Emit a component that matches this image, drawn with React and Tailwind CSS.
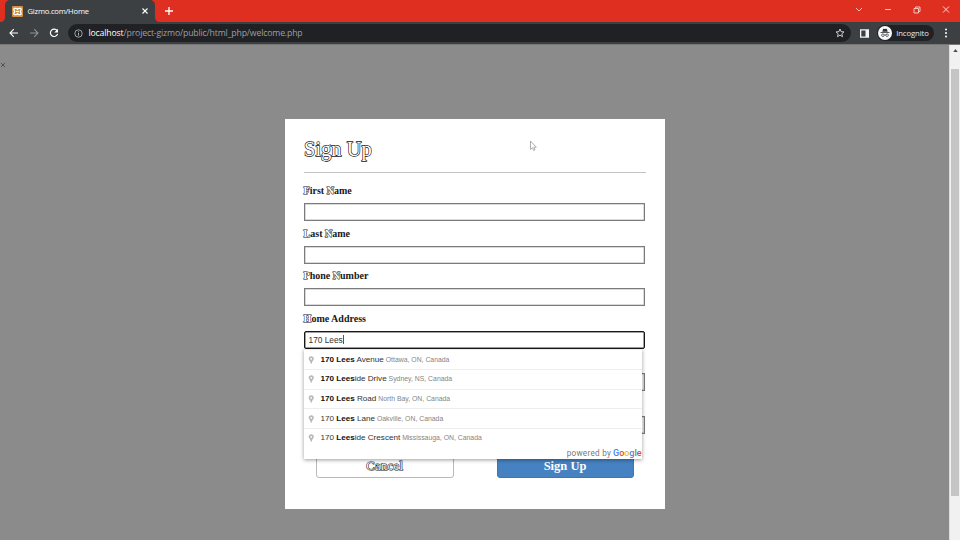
import React from "react";

const SUGGESTIONS = [
  { pre: "", bold: "170 Lees", rest: " Avenue", area: "Ottawa, ON, Canada" },
  { pre: "", bold: "170 Lees", rest: "ide Drive", area: "Sydney, NS, Canada" },
  { pre: "", bold: "170 Lees", rest: " Road", area: "North Bay, ON, Canada" },
  { pre: "170 ", bold: "Lees", rest: " Lane", area: "Oakville, ON, Canada" },
  { pre: "170 ", bold: "Lees", rest: "ide Crescent", area: "Mississauga, ON, Canada" },
];

function Hollow({ children }) {
  return <span className="text-white [-webkit-text-stroke:1px_#111] [paint-order:stroke_fill]">{children}</span>;
}

function Field({ label, children }) {
  return (
    <div className="h-[42.6px]">
      <div className="h-[18px] text-[10px] leading-[12px] font-bold text-[#181818] whitespace-pre">{label}</div>
      {children || <div className="h-[18px] w-[341px] border border-[#7b7b7b] shadow-[inset_0_0_0_0.5px_#b5b5b5]" />}
    </div>
  );
}

function Pin() {
  return (
    <svg viewBox="0 0 8 10" className="mr-[6px] h-[10px] w-[6.5px] shrink-0">
      <path d="M4 .5C2 .5.8 1.9.8 3.6.8 5.6 3 6.3 3.5 9.6h1C5 6.3 7.2 5.6 7.2 3.6 7.2 1.9 6 .5 4 .5Z" fill="#b8b8b8" />
      <circle cx="4" cy="3.6" r="1.2" fill="#fff" />
    </svg>
  );
}

function TabStrip() {
  return (
    <div className="flex h-[22px] bg-[#df2f20]">
      <div className="relative ml-[5px] flex h-[22px] w-[150px] items-center rounded-t-[5px] bg-[#3c4043] pl-[7px] text-white">
        <svg className="absolute bottom-0 -left-[5px] h-[5px] w-[5px]" viewBox="0 0 5 5"><path d="M5 0v5H0q5 0 5-5" fill="#3c4043" /></svg>
        <svg className="absolute -right-[5px] bottom-0 h-[5px] w-[5px]" viewBox="0 0 5 5"><path d="M0 0v5h5Q0 5 0 0" fill="#3c4043" /></svg>
        <svg viewBox="0 0 11 11" className="h-[11px] w-[11px]">
          <rect width="11" height="11" rx="1" fill="#d3913f" />
          <path d="M2.7 2.3h1.4c1 0 1 .8 1.4 1.1.4-.3.4-1.1 1.4-1.1h1.4c.8 0 1 .7.8 1.5L8.3 5.5l.8 1.7c.2.8 0 1.5-.8 1.5H6.9c-1 0-1-.8-1.4-1.1-.4.3-.4 1.1-1.4 1.1H2.7c-.8 0-1-.7-.8-1.5l.8-1.7-.8-1.7c-.2-.8 0-1.5.8-1.5Z" fill="none" stroke="#fff" strokeWidth="1.3" />
          <path d="M4 5.5h3" stroke="#fff" strokeWidth="1.2" />
        </svg>
        <span className="ml-[4.5px] w-[114px] text-[7.6px] leading-[10px] tracking-[-0.2px]">Gizmo.com/Home</span>
        <svg viewBox="0 0 6 6" className="h-[6px] w-[6px] shrink-0"><path d="m.5.5 5 5m0-5-5 5" stroke="#fff" strokeWidth="1.1" /></svg>
      </div>
      <svg viewBox="0 0 8 8" className="mt-[7px] ml-[10px] h-[8px] w-[8px]"><path d="M4 0v8M0 4h8" stroke="#fff" strokeWidth="1.3" /></svg>
      <div className="mt-[5px] ml-auto flex h-[9px] items-center gap-[21px] pr-[10.5px]">
        <svg viewBox="0 0 8 8" className="h-2 w-2" fill="none" stroke="#f8c3bd"><path d="m1 2 3 3 3-3" /></svg>
        <svg viewBox="0 0 8 8" className="h-2 w-2" fill="none" stroke="#f8c3bd"><path d="M1 3.500h6" /></svg>
        <svg viewBox="0 0 8 8" className="h-2 w-2" fill="none" stroke="#f8c3bd"><path d="M1 2.5h4.500V7H1ZM2.500 2.500V1H7v4.500H5.500" /></svg>
        <svg viewBox="0 0 8 8" className="h-2 w-2" fill="none" stroke="#fbd8d4"><path d="m1 .5 6 6m0-6-6 6" /></svg>
      </div>
    </div>
  );
}

function Toolbar() {
  return (
    <div className="flex h-[22px] items-center bg-[#3c4043]">
      <svg viewBox="0 0 10 10" className="ml-[9px] h-[10px] w-[10px]" fill="none" stroke="#fff" strokeWidth="1.1"><path d="M9 5H1.2M4.800 1.200 1 5l3.800 3.800" /></svg>
      <svg viewBox="0 0 10 10" className="ml-[10px] h-[10px] w-[10px]" fill="none" stroke="#8e9194" strokeWidth="1.1"><path d="M1 5h7.800M5.200 1.200 9 5 5.200 8.800" /></svg>
      <svg viewBox="0 0 10 10" className="ml-[10px] h-[10px] w-[10px]">
        <path d="M8.100 2.600A3.700 3.700 0 1 0 8.600 6" fill="none" stroke="#fff" strokeWidth="1.2" />
        <path d="M9 .8v3.700H5.300Z" fill="#fff" />
      </svg>
      <div className="ml-[9px] flex h-[18px] w-[783px] items-center rounded-full bg-[#202124] pr-[6px] pl-[6px]">
        <svg viewBox="0 0 9 9" className="h-[9px] w-[9px]" fill="none" stroke="#aeb1b5"><circle cx="4.5" cy="4.500" r="3.700" strokeWidth=".9" /><path d="M4.500 4v2.600M4.500 2.300v1" /></svg>
        <span className="ml-[5.5px] text-[8.7px] leading-[12px] tracking-[-0.155px] text-[#9aa0a6]"><span className="text-white">localhost</span>/project-gizmo/public/html_php/welcome.php</span>
        <svg viewBox="0 0 10 10" className="ml-auto h-[10px] w-[10px]" fill="none" stroke="#dadce0" strokeWidth=".9"><path d="m5 1 1.100 2.700 2.900.2-2.200 1.900.7 2.900L5 7.100 2.500 8.700l.7-2.900L1 3.900l2.900-.2Z" /></svg>
      </div>
      <svg viewBox="0 0 9 9" className="ml-[9px] h-[9px] w-[9px]"><path d="M0 .3h9v8.400H0ZM1.300 1.600v5.800H5.500V1.600Z" fill="#f1f3f4" fillRule="evenodd" /></svg>
      <div className="ml-[8px] flex h-[16px] w-[57px] items-center rounded-full bg-[#202124] pl-px">
        <svg viewBox="0 0 14 14" className="h-[14px] w-[14px]">
          <circle cx="7" cy="7" r="7" fill="#f8f9fa" />
          <path d="M4.300 5.700 5.100 3q.2-.5.8-.3l1.100.3 1.100-.3q.6-.2.8.3l.8 2.700Z" fill="#303134" />
          <path d="M2.500 6.500h9" stroke="#303134" strokeWidth=".8" />
          <g fill="none" stroke="#404246" strokeWidth=".8"><circle cx="4.900" cy="9.200" r="1.300" /><circle cx="9.100" cy="9.200" r="1.300" /><path d="M6.200 9q.8-.5 1.600 0" /></g>
        </svg>
        <span className="ml-[4.2px] text-[7.7px] leading-[10px] tracking-[-0.1px] text-[#e8eaed]">Incognito</span>
      </div>
      <svg viewBox="0 0 4 10" className="ml-[10px] h-[10px] w-[4px]" fill="#fff"><circle cx="2" cy="1.500" r="1" /><circle cx="2" cy="5" r="1" /><circle cx="2" cy="8.500" r="1" /></svg>
    </div>
  );
}

function Suggestions() {
  return (
    <div className="absolute top-[18.7px] left-[0.3px] h-[109.5px] w-[338.5px] bg-white font-['Liberation_Sans',Arial,sans-serif] shadow-[0_1px_4px_rgba(0,0,0,0.4)]">
      {SUGGESTIONS.map((s) => (
        <div key={s.area} className="flex h-[19.65px] items-center border-t border-[#eeeeee] pl-[4px] whitespace-pre">
          <Pin />
          <span className="text-[8.125px] leading-[10px] text-[#333]">{s.pre}<b className="text-[#111]">{s.bold}</b>{s.rest}<span className="text-[6.875px] text-[#858585]"> {s.area}</span></span>
        </div>
      ))}
      <div className="flex items-center justify-end pr-px font-['Roboto',sans-serif] leading-[10px] text-[#777]">
        <span className="mr-[2px] text-[8.2px] tracking-[0.25px]">powered by</span>
        <span className="text-[9px] tracking-[-0.05px] font-medium"><span className="text-[#4285f4]">G</span><span className="text-[#ea4335]">o</span><span className="text-[#fbbc05]">o</span><span className="text-[#4285f4]">g</span><span className="text-[#34a853]">l</span><span className="text-[#ea4335]">e</span></span>
      </div>
    </div>
  );
}

function SignUpForm() {
  return (
    <div className="relative mt-[75px] ml-[285px] h-[390px] w-[380px] bg-white pt-[19px] pl-[19px] font-['Liberation_Serif','Times_New_Roman',serif]">
      <h1 className="h-[34px] text-[20.5px] leading-[22px] font-normal text-white [-webkit-text-stroke:1.3px_#111] [paint-order:stroke_fill]">Sign Up</h1>
      <div className="h-px w-[342px] bg-[#c4c4c4]" />
      <div className="-ml-[0.4px] pt-[12px]">
        <Field label={<><Hollow>F</Hollow>irst <Hollow>N</Hollow>ame</>} />
        <Field label={<><Hollow>L</Hollow>ast <Hollow>N</Hollow>ame</>} />
        <Field label={<><Hollow>P</Hollow>hone <Hollow>N</Hollow>umber</>} />
        <Field label={<><Hollow>H</Hollow>ome Address</>}>
          <div className="relative z-10 h-[18px] w-[341px]">
            <div className="flex h-[18px] items-center rounded-[2px] border border-[#171717] bg-white pl-[4px] font-['Liberation_Sans',Arial,sans-serif] text-[8.3px] text-[#333] shadow-[inset_0_0_0_0.5px_#444]">
              170 Lees<span className="h-[9px] w-px bg-[#555]" />
            </div>
            <Suggestions />
          </div>
        </Field>
        <Field label="" />
        <Field label="" />
      </div>
      <div className="mt-[7px] ml-[12px] flex gap-[43px] text-[12.5px] leading-[15px] font-bold">
        <div className="h-[30px] w-[137.5px] rounded-[3px] border border-[#b9b9b9] pt-[10px] text-center font-normal tracking-[0.38px] text-white [-webkit-text-stroke:1.1px_#111] [paint-order:stroke_fill]">Cancel</div>
        <div className="h-[30px] w-[137px] rounded-[3px] border border-[#3e76b4] bg-[#4682c2] pt-[10px] text-center text-white">Sign Up</div>
      </div>
      <svg viewBox="0 0 8 12" className="absolute top-[21px] left-[244px] h-[12px] w-[8px]"><path d="M1.500 1v8.500l2-1.800 1.200 2.800 1.300-.6-1.200-2.700h2.500Z" fill="#fff" stroke="#999" strokeWidth=".8" /></svg>
    </div>
  );
}

export default function App() {
  return (
    <div className="flex h-[540px] w-[960px] flex-col overflow-hidden font-['Open_Sans','Noto_Sans',sans-serif]">
      <TabStrip />
      <Toolbar />
      <div className="flex h-[496px] border-t border-[#777] bg-[#8b8b8b]">
        <div className="relative w-[949px]">
          <svg viewBox="0 0 6 6" className="absolute top-[17px] left-0 h-[6px] w-[6px]"><path d="m1 1 4 4m0-4-4 4" stroke="#424242" strokeWidth=".8" /></svg>
          <div className="-mt-px flex"><SignUpForm /></div>
        </div>
        <div className="w-[11px] border-l border-[#dedede] bg-[#f1f1f1] text-center">
          <div className="flex h-[24px] justify-center pt-[4px]"><svg viewBox="0 0 6 4" className="h-[3px] w-[5px]"><path d="m3 0 3 4H0Z" fill="#505050" /></svg></div>
          <div className="ml-px h-[427px] w-[8px] bg-[#c5c5c5]" />
        </div>
      </div>
    </div>
  );
}
